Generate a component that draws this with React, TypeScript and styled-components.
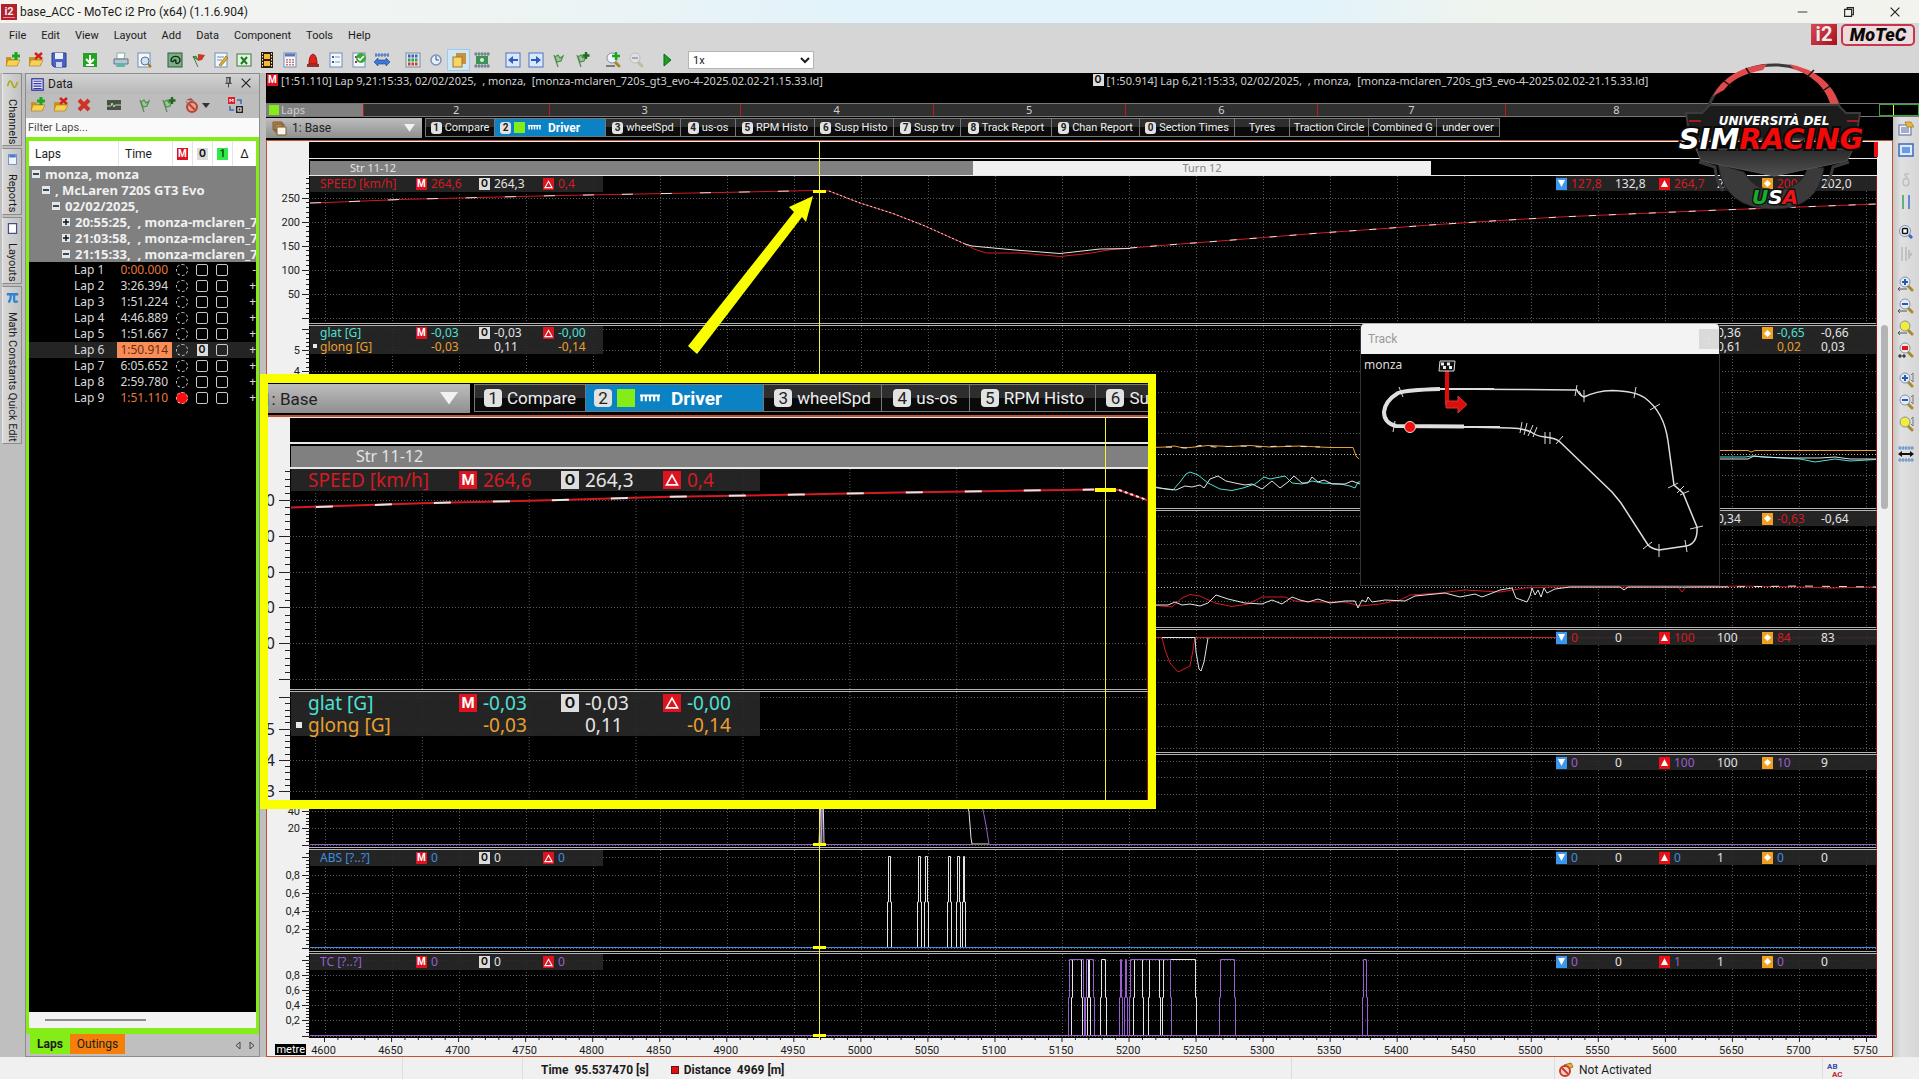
import React from "react";
import styled, { createGlobalStyle } from "styled-components";

const UI = `Roboto, "Liberation Sans", sans-serif`;
const DATA = `"Noto Sans", "DejaVu Sans", sans-serif`;

const RED = "#d41a22";
const CYAN = "#4fe0d4";
const ORANGE = "#e8a030";
const BLUE = "#3d8fe0";
const PURPLE = "#9a5fd0";
const WHITE = "#e4e4e4";

const Global = createGlobalStyle`
  * { box-sizing: border-box; }
  body { margin: 0; background: #d6d6d6; font-family: ${UI}; font-size: 11px; color: #1c1c1c; }
  button, select, input { font: inherit; color: inherit; }
  button { padding: 0; border: 0; background: none; }
`;

const Screen = styled.div`
  position: relative;
  display: flex;
  flex-direction: column;
  min-height: 100vh;
  overflow: hidden;
`;

/* ---------- title, menu, toolbar ---------- */
const TitleBar = styled.header`
  display: flex;
  align-items: center;
  gap: 3px;
  height: 23px;
  padding: 1px 16px 0 1px;
  background: linear-gradient(90deg, #f5f4ef 0%, #eef4f3 26%, #e2f3fb 45%, #e2f3fb 68%, #f0f4ee 78%, #f3f3ee 100%);
`;
const Caption = styled.h1`
  flex: 1;
  margin: 0;
  font-size: 12px;
  font-weight: 400;
  white-space: nowrap;
`;
const WindowButtons = styled.div`
  display: flex;
  gap: 30px;
`;
const WindowButton = styled.button`
  width: 16px;
  height: 16px;
  line-height: 0;
`;
const CommandArea = styled.div`
  display: flex;
  justify-content: space-between;
  background: #d6d6d6;
`;
const MenuBar = styled.nav`
  display: flex;
  gap: 15px;
  height: 25px;
  padding: 0 9px;
`;
const MenuItem = styled.button`
  font-size: 11px;
  line-height: 24px;
`;
const Toolbar = styled.div`
  display: flex;
  align-items: center;
  gap: 8px;
  height: 25px;
  padding: 0 1px 1px;
`;
const ToolGroup = styled.div`
  display: flex;
`;
const ToolButton = styled.button<{ $on?: boolean; $dim?: boolean }>`
  display: grid;
  place-items: center;
  width: 23px;
  height: 22px;
  background: ${(p) => (p.$on ? "#cfe6f7" : "none")};
  box-shadow: ${(p) => (p.$on ? "inset 0 0 0 1px #9ccbef" : "none")};
  opacity: ${(p) => (p.$dim ? 0.35 : 1)};
`;
const SpeedSelect = styled.select`
  width: 126px;
  height: 18px;
  margin-left: 2px;
  padding: 0;
  border: 1px solid #b5b5b5;
  background: #fff;
`;
const Brand = styled.div`
  display: flex;
  gap: 4px;
  height: 22px;
  margin: 1px 4px 0 0;
`;
const BrandI2 = styled.span`
  width: 26px;
  height: 21px;
  background: linear-gradient(135deg, #d84a55, #a80f1c);
  color: #eee;
  font: 700 20px/21px ${UI};
  text-align: center;
`;
const BrandMotec = styled.span`
  width: 74px;
  height: 22px;
  border: 2px solid #c8344c;
  border-radius: 5px;
  background: #eddcde;
  color: #0a0a0a;
  font: italic 900 18px/18px ${UI};
  text-align: center;
`;

/* ---------- workspace frame ---------- */
const Workspace = styled.div`
  display: flex;
  flex: 1;
  background: #bfbfbf;
`;
const SideTabs = styled.div`
  display: flex;
  flex-direction: column;
  gap: 2px;
  width: 25px;
  padding: 0 2px;
`;
const SideTab = styled.button<{ $h: number }>`
  display: flex;
  align-items: center;
  gap: 8px;
  width: 20px;
  height: ${(p) => p.$h}px;
  padding-top: 4px;
  border: 1px solid #8c8c8c;
  border-left-color: #e8e8e8;
  background: linear-gradient(90deg, #d8d8d8, #c2c2c2);
  writing-mode: vertical-rl;
  font-size: 11px;
  line-height: 18px;
  white-space: nowrap;
  & > svg { flex: none; }
`;
const DataPanel = styled.aside`
  display: flex;
  flex-direction: column;
  width: 235px;
  border: 1px solid #8c8c8c;
`;
const PanelTitle = styled.div`
  display: flex;
  align-items: center;
  gap: 4px;
  height: 20px;
  padding: 0 6px 0 5px;
  background: linear-gradient(#d2d2d2, #b8b8b8);
  font-size: 12px;
  & > span { flex: 1; }
`;
const PanelTools = styled.div`
  display: flex;
  align-items: center;
  height: 24px;
  padding-bottom: 2px;
  background: #bdbdbd;
`;
const Gap = styled.span<{ $w: number }>`
  width: ${(p) => p.$w}px;
`;
const FilterInput = styled.input`
  width: 100%;
  height: 19px;
  padding: 0 2px;
  border: 0;
  background: #fafafa;
  font-size: 11px;
  &::placeholder { color: #4a4a4a; }
`;
const GreenFrame = styled.div`
  display: flex;
  flex: 1;
  flex-direction: column;
  border: solid #84ec16;
  border-width: 4px 3px 6px 3px;
  background: #000;
`;
const LapHead = styled.div`
  display: grid;
  grid-template-columns: 89px 54px 20px 20px 20px 1fr;
  align-items: center;
  height: 25px;
  background: #fff;
  font-size: 12px;
  & > span { display: flex; justify-content: center; align-items: center; height: 25px; border-left: 1px solid #e4e4e4; }
  & > span:first-child { justify-content: flex-start; padding-left: 6px; border: 0; }
  & > span:nth-child(2) { justify-content: flex-start; padding-left: 6px; }
`;
const TreeRow = styled.div<{ $level: number }>`
  display: flex;
  align-items: center;
  gap: 5px;
  height: 16px;
  padding-left: ${(p) => 3 + p.$level * 10}px;
  overflow: hidden;
  background: #808080;
  color: #f0f0f0;
  font: 700 13px/16px ${DATA};
  white-space: pre;
`;
const Expander = styled.button`
  flex: none;
  width: 8px;
  height: 8px;
  background: #dfe8ee;
  line-height: 0;
`;
const LapTable = styled.table`
  width: 100%;
  border-collapse: collapse;
  table-layout: fixed;
  color: #d8d8d8;
  font: 12px/16px ${DATA};
  td { height: 16px; padding: 0; overflow: hidden; white-space: nowrap; }
  td:first-child { width: 88px; padding-left: 45px; }
  td:nth-child(2) { width: 55px; padding-right: 4px; text-align: right; }
  td:nth-child(3), td:nth-child(4), td:nth-child(5) { width: 20px; text-align: center; line-height: 0; }
  td:last-child { text-align: right; }
`;
const LapRow = styled.tr<{ $sel?: boolean }>`
  background: ${(p) => (p.$sel ? "#242424" : "#000")};
`;
const LapTime = styled.td<{ $tone?: string }>`
  color: ${(p) => (p.$tone === "warm" ? "#e8793a" : p.$tone === "best" ? "#6b2c0c" : "inherit")};
  background: ${(p) => (p.$tone === "best" ? "#f98d58" : "none")};
`;
const Mark = styled.input<{ $round?: boolean }>`
  appearance: none;
  display: inline-block;
  width: 12px;
  height: 12px;
  margin: 0;
  border: 1px ${(p) => (p.$round ? "dashed" : "solid")} #c8c8c8;
  border-radius: ${(p) => (p.$round ? "50%" : "2px")};
  &:checked { background: #fb0d0d; }
`;
const ListScroll = styled.div`
  height: 16px;
  margin-top: auto;
  padding: 7px 16px;
  background: #f2f2f2;
  &::before { content: ""; display: block; width: 101px; height: 2px; background: #8c8c8c; }
`;
const PanelTabs = styled.div`
  display: flex;
  height: 22px;
  padding: 0 4px;
`;
const PanelTab = styled.button<{ $on?: boolean }>`
  height: 20px;
  padding: 0 7px;
  background: ${(p) => (p.$on ? "#84ec16" : "#f57f0a")};
  font-weight: ${(p) => (p.$on ? 700 : 400)};
  font-size: 12px;
`;
const PanelArrows = styled.span`
  display: flex;
  align-items: center;
  gap: 8px;
  margin-left: auto;
`;

/* ---------- main area ---------- */
const Main = styled.main`
  position: relative;
  display: flex;
  flex: 1;
  flex-direction: column;
  min-width: 0;
  margin-left: 6px;
  background: #000;
`;
const Outings = styled.div`
  display: flex;
  height: 30px;
  padding: 1px 1px;
  color: #d0d0d0;
  font: 11px/14px ${DATA};
  white-space: pre;
`;
const Outing = styled.div`
  display: flex;
  flex: 1;
  gap: 3px;
`;
const LapStrip = styled.div`
  display: flex;
  height: 14px;
  border: solid #777;
  border-width: 1px 0;
  color: #d0d0d0;
  font: 11px/12px ${DATA};
  text-align: center;
`;
const StripCell = styled.div<{ $grow: number; $tone: string }>`
  display: flex;
  flex: ${(p) => p.$grow} 1 0;
  justify-content: center;
  align-items: center;
  background: ${(p) => p.$tone};
  border-left: 1px solid #c01818;
`;
const StripLabel = styled.div`
  display: flex;
  flex: 94 1 0;
  align-items: center;
  gap: 2px;
  padding-left: 3px;
  background: #808080;
`;
const GreenBox = styled.i<{ $s: number }>`
  flex: none;
  width: ${(p) => p.$s}px;
  height: ${(p) => p.$s}px;
  background: #84ec16;
`;
const Position = styled.div`
  position: relative;
  flex: none;
  width: 40px;
  border: 1px solid #2fae2f;
  &::after { content: ""; position: absolute; left: 13px; top: 0; bottom: 0; width: 1px; background: #f4f040; }
`;
const Columns = styled.div`
  display: flex;
  flex: 1;
`;
const Worksheet = styled.div`
  display: flex;
  flex: 1;
  flex-direction: column;
  min-width: 0;
`;
const SheetBar = styled.div<{ $big?: boolean }>`
  display: flex;
  flex: none;
  align-items: flex-start;
  gap: ${(p) => (p.$big ? 4 : 3)}px;
  height: ${(p) => (p.$big ? 32 : 23)}px;
  padding-top: 1px;
  background: #000;
  overflow: hidden;
`;
const BookSelect = styled.label<{ $big?: boolean }>`
  display: flex;
  flex: none;
  align-items: center;
  gap: 5px;
  width: ${(p) => (p.$big ? 210 : 156)}px;
  height: ${(p) => (p.$big ? 29 : 20)}px;
  margin-left: ${(p) => (p.$big ? -8 : 0)}px;
  padding: ${(p) => (p.$big ? "0 12px 0 2px" : "0 7px 0 6px")};
  background: linear-gradient(#bdbdbd, #8f8f8f);
  select {
    flex: 1;
    min-width: 0;
    padding: 0;
    border: 0;
    appearance: none;
    background: none;
    color: #222;
    font-size: ${(p) => (p.$big ? 17 : 12)}px;
  }
`;
const SheetTabs = styled.div<{ $big?: boolean }>`
  display: flex;
  height: ${(p) => (p.$big ? 28 : 19)}px;
  border: 1px solid #777;
`;
const SheetTab = styled.button<{ $on?: boolean; $big?: boolean; $w: number }>`
  display: flex;
  flex: none;
  align-items: center;
  justify-content: ${(p) => (p.$on ? "flex-start" : "center")};
  gap: ${(p) => (p.$big ? 5 : 3)}px;
  width: ${(p) => p.$w}px;
  padding: ${(p) => (p.$on ? (p.$big ? "0 8px" : "0 5px") : "0")};
  border-right: 1px solid #777;
  background: ${(p) => (p.$on ? "#0b82c4" : "linear-gradient(#2e2e2e 50%, #0a0a0a 50%)")};
  color: #eee;
  font-size: ${(p) => (p.$big ? 17 : 11)}px;
  white-space: nowrap;
  &:last-child { border-right: 0; }
  b { margin-left: ${(p) => (p.$big ? 6 : 4)}px; color: #fff; font-size: ${(p) => (p.$big ? 19 : 12)}px; }
`;
const KeyCap = styled.i<{ $big?: boolean }>`
  width: ${(p) => (p.$big ? 18 : 11)}px;
  height: ${(p) => (p.$big ? 18 : 12)}px;
  border-radius: ${(p) => (p.$big ? 4 : 3)}px;
  background: #e2e2e2;
  color: #222;
  font: ${(p) => (p.$big ? "17px/18px" : "700 10px/12px")} ${UI};
  text-align: center;
`;
const ChartFrame = styled.section`
  display: flex;
  flex: 1;
  border: 1px solid #c4512f;
  background: #f0f0f0;
`;
const Charts = styled.div`
  display: flex;
  flex: 1;
  flex-direction: column;
  min-width: 0;
  padding-top: 1px;
`;
const Gutter = styled.div`
  width: 15px;
  padding: 184px 4px 0;
  &::before { content: ""; display: block; width: 7px; height: 184px; border-radius: 4px; background: #b4b4b4; }
`;
const Stack = styled.div`
  position: relative;
`;
const AxisRow = styled.div<{ $axis: number }>`
  display: grid;
  grid-template-columns: ${(p) => p.$axis}px minmax(0, 1fr);
`;
const AxisSvg = styled.svg<{ $big?: boolean }>`
  display: block;
  text { font: ${(p) => (p.$big ? 16 : 11)}px ${(p) => (p.$big ? DATA : UI)}; text-anchor: end; fill: #222; }
  path { stroke: #222; stroke-width: 1; fill: none; }
`;
const Plot = styled.div<{ $last?: boolean; $big?: boolean; $h: number }>`
  position: relative;
  height: ${(p) => p.$h}px;
  border-right: 1px solid #8a1515;
  border-bottom: ${(p) => (p.$last ? "0" : "3px double #b4b4b4")};
  background: #000;
  overflow: hidden;
  & > svg { display: block; width: 100%; height: 100%; }
  & > svg path { fill: none; vector-effect: non-scaling-stroke; }
  & > svg path.curve { stroke-width: ${(p) => (p.$big ? 2 : 1)}px; }
`;
const TopStrip = styled.div<{ $big?: boolean }>`
  display: grid;
  grid-template-rows: ${(p) => (p.$big ? "24px 25px" : "16px 17px")};
  border-bottom: ${(p) => (p.$big ? 2 : 1)}px solid #e8e8e8;
  background: #000;
`;
const Sections = styled.div<{ $big?: boolean }>`
  display: flex;
  padding: 2px 0 0 1px;
  border-top: ${(p) => (p.$big ? 2 : 1)}px solid #e8e8e8;
  font: ${(p) => (p.$big ? "16px/20px" : "11px/14px")} ${DATA};
`;
const Section = styled.div<{ $grow: number; $kind: "str" | "turn" | "none"; $indent?: number }>`
  flex: ${(p) => p.$grow} 1 0;
  text-indent: ${(p) => p.$indent ?? 0}px;
  background: ${(p) => (p.$kind === "str" ? "#808080" : p.$kind === "turn" ? "#f0f0f0" : "#000")};
  color: ${(p) => (p.$kind === "str" ? "#e4e4e4" : "#858585")};
  text-align: ${(p) => (p.$kind === "turn" ? "center" : "left")};
`;
const Cursor = styled.div`
  position: absolute;
  top: 0;
  bottom: 0;
  width: 1px;
  background: #f4f432;
`;
const CursorLayer = styled.div<{ $axis: number }>`
  position: absolute;
  inset: 0 0 0 ${(p) => p.$axis}px;
  pointer-events: none;
`;
const CursorTick = styled.i<{ $big?: boolean }>`
  position: absolute;
  left: ${(p) => (p.$big ? -10 : -6)}px;
  width: ${(p) => (p.$big ? 21 : 13)}px;
  height: ${(p) => (p.$big ? 4 : 3)}px;
  background: #ffff00;
`;
const EndBlock = styled.i`
  position: absolute;
  top: 0;
  right: -1px;
  width: 4px;
  height: 15px;
  background: #e81010;
`;
const LegendLeft = styled.div<{ $big?: boolean }>`
  position: absolute;
  top: 0;
  left: 1px;
  width: ${(p) => (p.$big ? 469 : 293)}px;
  padding-left: ${(p) => (p.$big ? 17 : 10)}px;
  background: rgba(40, 40, 40, 0.9);
`;
const LegendDot = styled.i<{ $big?: boolean }>`
  position: absolute;
  left: ${(p) => (p.$big ? 5 : 3)}px;
  bottom: ${(p) => (p.$big ? 8 : 6)}px;
  width: ${(p) => (p.$big ? 6 : 4)}px;
  height: ${(p) => (p.$big ? 6 : 4)}px;
  background: #e8e8e8;
`;
const LegendRow = styled.div<{ $big?: boolean; $color: string; $two?: boolean }>`
  display: grid;
  grid-template-columns: ${(p) => (p.$big ? "151px 102px 102px 1fr" : "96px 63px 64px 1fr")};
  align-items: center;
  height: ${(p) => (p.$big ? 22 : p.$two ? 14 : 16)}px;
  color: ${(p) => p.$color};
  font: ${(p) => (p.$big ? "19px/22px" : "12px/14px")} ${DATA};
  white-space: nowrap;
`;
const Cell = styled.span<{ $big?: boolean; $plain?: boolean; $indent?: boolean }>`
  display: flex;
  align-items: center;
  gap: ${(p) => (p.$big ? 6 : 4)}px;
  padding-left: ${(p) => (p.$indent ? (p.$big ? 24 : 15) : 0)}px;
  color: ${(p) => (p.$plain ? WHITE : "inherit")};
`;
const LegendRight = styled.div`
  position: absolute;
  top: 0;
  right: 0;
  width: 320px;
  background: rgba(40, 40, 40, 0.9);
`;
const StatRow = styled.div<{ $color: string; $two?: boolean }>`
  display: grid;
  grid-template-columns: 59px 44px 58px 45px 59px 1fr;
  align-items: center;
  height: ${(p) => (p.$two ? 14 : 15)}px;
  color: ${(p) => p.$color};
  font: 12px/14px ${DATA};
`;
const Badge = styled.i<{ $bg: string; $fg?: string; $big?: boolean }>`
  display: inline-grid;
  flex: none;
  place-items: center;
  width: ${(p) => (p.$big ? 18 : 11)}px;
  height: ${(p) => (p.$big ? 18 : 12)}px;
  background: ${(p) => p.$bg};
  color: ${(p) => p.$fg ?? "#fff"};
  font: 700 ${(p) => (p.$big ? "15px/18px" : "10px/12px")} ${UI};
`;
const DistanceAxis = styled.div`
  position: relative;
  display: grid;
  grid-template-columns: 42px minmax(0, 1fr);
  height: 18px;
`;
const Unit = styled.span`
  justify-self: end;
  align-self: center;
  margin: 4px 3px 0 0;
  padding: 0 1px;
  background: #000;
  color: #fff;
  font: 11px/11px ${UI};
`;
const DistanceScale = styled.div`
  position: relative;
  & > svg { display: block; width: 100%; height: 5px; }
`;
const DistanceLabel = styled.span`
  position: absolute;
  top: 6px;
  width: 40px;
  margin-left: -21px;
  font: 11px/13px ${UI};
  text-align: center;
`;
const RightTools = styled.div`
  display: flex;
  flex-direction: column;
  align-items: center;
  gap: 8px;
  width: 26px;
  background: linear-gradient(90deg, #c6c6c6, #e0e0e0 30%, #d6d6d6);
`;
const RightGroup = styled.div`
  display: flex;
  flex-direction: column;
`;

/* ---------- floating parts ---------- */
const TrackWindow = styled.section`
  position: absolute;
  top: 251px;
  right: 199px;
  width: 360px;
  height: 262px;
  border: 1px solid #333;
  border-top: 0;
  border-radius: 4px 4px 0 0;
  background: #000;
  overflow: hidden;
`;
const TrackTitle = styled.div`
  display: flex;
  align-items: center;
  justify-content: space-between;
  height: 30px;
  padding-left: 7px;
  background: #f3f3f3;
  color: #9a9a9a;
  font: 12px ${UI};
`;
const TrackClose = styled.button`
  width: 20px;
  height: 20px;
  background: #dadada;
  color: #eee;
`;
const TrackBody = styled.div`
  padding: 3px;
  color: #dcdcdc;
  font: 12px/16px ${DATA};
  & > svg { position: absolute; left: 0; top: 30px; }
`;
const Magnifier = styled.section`
  position: absolute;
  left: -6px;
  top: 301px;
  display: flex;
  flex-direction: column;
  width: 896px;
  height: 435px;
  border: 9px solid #faff00;
  border-left-width: 8px;
  border-right-width: 8px;
  background: #f0f0f0;
  overflow: hidden;
`;
const MagnifierCharts = styled.div`
  position: relative;
  flex: 1;
  border-top: 2px solid #c4512f;
  padding-top: 1px;
`;
const Arrow = styled.svg`
  position: absolute;
  left: 414px;
  top: 120px;
`;
const Emblem = styled.svg`
  position: absolute;
  right: 49px;
  top: -15px;
`;

/* ---------- status ---------- */
const StatusBar = styled.footer`
  display: grid;
  grid-template-columns: 403fr 120fr 769fr 263fr 268fr 96fr;
  height: 22px;
  background: #f0f0f0;
  font-size: 12px;
`;
const StatusCell = styled.div<{ $pad?: number; $strong?: boolean }>`
  display: flex;
  align-items: center;
  gap: 5px;
  min-width: 0;
  height: 22px;
  padding: 3px 0 0 ${(p) => p.$pad ?? 0}px;
  border-right: 1px solid #dcdcdc;
  font-weight: ${(p) => (p.$strong ? 700 : 400)};
  white-space: pre;
  &:last-child { border-right: 0; }
`;
const RedDot = styled.i`
  width: 8px;
  height: 8px;
  margin-left: 17px;
  border: 1px solid #701010;
  background: #e01010;
`;

/* ---------- icons ---------- */
const lens = (fill: string, inner: React.ReactNode) => (
  <>
    <path d="M10 10l4 4" stroke="#a88a2c" strokeWidth="3" strokeLinecap="round" />
    <circle cx="7" cy="6" r="5" fill={fill} stroke="#8294a8" />
    {inner}
  </>
);
const reach = <path d="M0 13h9M2 11l-2 2 2 2" stroke="#555" />;
const rise = <path d="M15 1v9M13 3l2-2M13 8l2 2" stroke="#777" />;
const folder = (
  <>
    <path d="M1 5h5l1 2h6v7H1z" fill="#c99420" />
    <path d="M3 8h12l-3 6H1z" fill="#f6d154" stroke="#a87c18" strokeWidth=".6" />
  </>
);
const plus = <path d="M11 0v8M7 4h8" stroke="#1da51d" strokeWidth="3" />;
const cross = <path d="M7 1l7 6M14 1L7 7" stroke="#cf2418" strokeWidth="2.6" />;
const flag = (
  <path d="M3 3l4 12M4 5l3-2 2 3 3-2-2 5-4 1z" stroke="#4f8d4a" strokeWidth="1.2" fill="#9cc796" />
);
const sheet = <rect x="2" y="1" width="12" height="14" fill="#f4f8fd" stroke="#6f90b8" />;

const ICONS: Record<string, React.ReactNode> = {
  open: <>{folder}{plus}</>,
  close: <>{folder}{cross}</>,
  save: (
    <>
      <path d="M1 1h14v14H3l-2-2z" fill="#4a62c4" stroke="#2b3c8c" />
      <path d="M4 1h8v6H4z" fill="#eaf0fb" />
      <path d="M5 10h6v5H5z" fill="#d0d8ee" />
    </>
  ),
  download: (
    <>
      <rect x="1" y="1" width="14" height="14" fill="#22a322" />
      <path d="M8 3v6M4 7l4 4 4-4M4 13h8" stroke="#fff" strokeWidth="2" fill="none" />
    </>
  ),
  print: (
    <>
      <path d="M4 1h8l-1 6H4z" fill="#fff" stroke="#8aa" />
      <path d="M1 7h14v5H1z" fill="#b9c5cf" stroke="#5f7383" />
      <path d="M4 11h8v4H3z" fill="#5bb8a8" />
    </>
  ),
  preview: <>{sheet}<circle cx="9" cy="9" r="4" fill="#cfe3f5" stroke="#59728c" /><path d="M12 12l3 3" stroke="#b06a20" strokeWidth="2" /></>,
  circuit: (
    <>
      <rect x="1" y="1" width="14" height="14" fill="#7db088" stroke="#2f5c3a" />
      <path d="M4 9c0-6 9-6 9-1 0 3-3 4-4 3s1-3-1-3-1 3-4 1z" fill="none" stroke="#0c2c14" strokeWidth="1.4" />
    </>
  ),
  flagRed: <><path d="M3 4l5 11M3 5l3-1 2 4z" stroke="#3d7d3d" fill="#69a869" /><path d="M8 2l7 1-3 5-4 1z" fill="#c93a22" /></>,
  edit: <>{sheet}<path d="M4 5h7M4 8h5" stroke="#7a8ea8" /><path d="M6 13l7-9 2 2-7 8z" fill="#e0b028" stroke="#7c5c10" strokeWidth=".6" /></>,
  excel: <><rect x="1" y="2" width="14" height="12" fill="#e4f2e4" stroke="#3a7d3a" /><path d="M5 5l6 7M11 5l-6 7" stroke="#1e7a1e" strokeWidth="2" /></>,
  film: (
    <>
      <rect x="2" y="0" width="12" height="16" fill="#2c1c08" />
      <path d="M5 2h6v5H5zM5 9h6v5H5z" fill="#f4ba30" />
      <path d="M3.5 1v14M12.5 1v14" stroke="#eee" strokeDasharray="1.5 1.5" />
    </>
  ),
  calc: <>{sheet}<path d="M3 3h10" stroke="#5878b8" strokeWidth="3" /><path d="M5 7v7M8 7v7M11 7v7" stroke="#d07878" strokeWidth="2" strokeDasharray="1.5 1" /></>,
  alarm: <><path d="M4 12c0-13 8-13 8 0z" fill="#e02418" stroke="#8c120a" /><rect x="2" y="12" width="12" height="3" fill="#98302a" /></>,
  list: <>{sheet}<path d="M4 5h2M4 10h2" stroke="#3460b0" strokeWidth="2" /><path d="M7 5h5M7 10h5" stroke="#8898b0" /></>,
  listCheck: <>{sheet}<path d="M4 5h2M4 10h2" stroke="#b03434" strokeWidth="2" /><circle cx="10" cy="6" r="5" fill="#3aa83a" /><path d="M7 6l2 2 4-4" stroke="#fff" strokeWidth="1.6" fill="none" /></>,
  measure: <><path d="M1 3h14M2 1v4M5 1v4M8 1v4M11 1v4M14 1v4" stroke="#3c68b8" /><path d="M0 10l4-4v2h8V6l4 4-4 4v-2H4v2z" fill="#3c78d8" stroke="#1e3f80" strokeWidth=".6" /></>,
  palette: (
    <>
      <rect x="1" y="1" width="14" height="14" fill="#dfe8ee" stroke="#7890a0" />
      <path d="M3 4h10" stroke="#4060c0" strokeWidth="3" strokeDasharray="2.5 1" />
      <path d="M3 8h10" stroke="#38a048" strokeWidth="3" strokeDasharray="2.5 1" />
      <path d="M3 12h10" stroke="#d04030" strokeWidth="3" strokeDasharray="2.5 1" />
    </>
  ),
  clock: <><circle cx="8" cy="8" r="5" fill="#e8f0fa" stroke="#7c92b4" strokeWidth="1.5" /><path d="M8 4v4h3" stroke="#30507c" fill="none" /></>,
  windows: <><rect x="5" y="1" width="10" height="11" fill="#c99040" /><rect x="2" y="5" width="9" height="10" fill="#f6d468" stroke="#a87820" /></>,
  chip: <><path d="M0 2h16M0 14h16M2 0v4M5 0v4M8 0v4M11 0v4M14 0v4M2 12v4M5 12v4M8 12v4M11 12v4M14 12v4" stroke="#56707c" /><rect x="2" y="4" width="12" height="8" fill="#3d9152" /><circle cx="8" cy="8" r="2" fill="#d2f0d8" /></>,
  left: <><rect x="1" y="1" width="14" height="14" fill="#dce8fa" stroke="#4a74c4" /><path d="M3 8l5-4v3h5v2H8v3z" fill="#2a5cc8" /></>,
  right: <><rect x="1" y="1" width="14" height="14" fill="#dce8fa" stroke="#4a74c4" /><path d="M13 8L8 4v3H3v2h5v3z" fill="#2a5cc8" /></>,
  flag: flag,
  flagPlus: <>{flag}<path d="M12 0v7M8.5 3.5h7" stroke="#1f6a1f" strokeWidth="2.4" /></>,
  zoomAdd: <>{lens("#eef4fb", <path d="M11 0v8M7 4h8" stroke="#1da51d" strokeWidth="2.4" />)}<path d="M1 14h9" stroke="#222" /></>,
  zoomDel: lens("#eef4fb", <path d="M4 6h6" stroke="#555" strokeWidth="2" />),
  play: <path d="M5 2l7 6-7 6z" fill="#18a024" stroke="#0d6c16" />,
  remove: <path d="M3 3l10 10M13 3L3 13" stroke="#cf3226" strokeWidth="4" />,
  scope: <><rect x="1" y="3" width="14" height="10" fill="#4a4f48" /><path d="M1 9h4l1-3 2 4 1-2h6" stroke="#b8e0b0" fill="none" /></>,
  blocked: <><path d="M3 4l5 10" stroke="#7c7c7c" /><circle cx="9" cy="10" r="5" fill="#e8a090" stroke="#b84434" strokeWidth="2" /><path d="M6 7l6 6" stroke="#b84434" strokeWidth="2" /><path d="M3 3l5-2 3 3z" fill="#b04a40" /></>,
  swap: <><rect x="0" y="0" width="7" height="7" fill="#e0202c" /><path d="M2 5V2l1.500 2L5 2v3" stroke="#fff" fill="none" /><rect x="8" y="9" width="7" height="7" fill="#222" /><rect x="10" y="11" width="3" height="3" fill="none" stroke="#fff" /><path d="M2 9v4h4M13 7V3H9" stroke="#3c70c0" strokeWidth="1.6" fill="none" /></>,
  props: <><rect x="1" y="5" width="12" height="10" fill="#f0f4fc" stroke="#58689c" /><path d="M3 8h8M3 10h8M3 12h8" stroke="#58689c" /><path d="M7 2h6l3 5H9z" fill="#e8b838" stroke="#8c6c18" strokeWidth=".6" /></>,
  panel: <><rect x="1" y="2" width="14" height="12" fill="#dceaff" stroke="#3c68b8" strokeWidth="1.5" /><path d="M4 5h8v6H4z" fill="#6a9be4" /></>,
  delta: <path d="M11 2H7c-1 2 4 4 4 8 0 5-6 5-6 0 0-3 3-4 4-3" stroke="#888" strokeWidth="1.5" fill="none" />,
  cursors: <><path d="M5 1v14" stroke="#3ba05a" strokeWidth="1.5" /><path d="M11 1v14" stroke="#4070d0" strokeWidth="1.5" /></>,
  lensBox: <><path d="M10 10l4 4" stroke="#3c68c0" strokeWidth="3" /><circle cx="7" cy="7" r="5.5" fill="#e4ecf6" stroke="#7f93aa" /><rect x="4.5" y="4.5" width="5" height="5" rx="1" fill="#fff" stroke="#111" strokeWidth="1.5" /></>,
  bars: <path d="M4 1v14M8 1v14M11 4v9M14 7l-3 4" stroke="#777" strokeWidth="1.5" />,
  zoomInX: <>{lens("#e2ebf8", <path d="M7 3v6M4 6h6" stroke="#3058a8" strokeWidth="2" />)}{reach}</>,
  zoomOutX: <>{lens("#e2ebf8", <path d="M4 6h6" stroke="#3058a8" strokeWidth="2" />)}{reach}</>,
  zoomFullX: <>{lens("#f4ec3c", null)}{reach}</>,
  zoomRed: <>{lens("#fbe8e8", <rect x="4" y="4" width="6" height="4" fill="#d81c1c" />)}<path d="M0 14h8M2 12v4M6 12v4" stroke="#111" /></>,
  zoomInY: <>{lens("#e2ebf8", <path d="M7 3v6M4 6h6" stroke="#3058a8" strokeWidth="2" />)}{rise}</>,
  zoomOutY: <>{lens("#e2ebf8", <path d="M4 6h6" stroke="#3058a8" strokeWidth="2" />)}{rise}</>,
  zoomFullY: <>{lens("#f4ec3c", null)}{rise}</>,
  fit: <><path d="M0 2h16M0 14h16M2 0v4M5 0v4M8 0v4M11 0v4M14 0v4M2 12v4M5 12v4M8 12v4M11 12v4M14 12v4" stroke="#5c88c8" /><path d="M0 8l4-3v2h8V5l4 3-4 3V9H4v2z" fill="#111" /></>,
  wave: <path d="M2 10c2-8 4-8 6-2s4 4 6-3" stroke="#b0a810" strokeWidth="2" fill="none" />,
  report: <><rect x="3" y="2" width="10" height="12" fill="#eef4fc" stroke="#5c84bc" /><path d="M4 4h8" stroke="#4a78c8" strokeWidth="3" /></>,
  layout: <rect x="3" y="2" width="10" height="12" fill="#fff" stroke="#40508c" strokeWidth="1.5" />,
  pi: <path d="M1 4h14M6 4c0 4-1 8-3 10M10 4v8c0 2 3 2 4 0" stroke="#2a86d0" strokeWidth="2.8" fill="none" />,
  dataList: <><rect x="1" y="1" width="14" height="14" fill="#e8eafc" stroke="#282c90" strokeWidth="1.5" /><path d="M3 4h10M3 7h10M3 10h10M3 13h10" stroke="#3034a8" strokeWidth="1.5" /></>,
  pin: <path d="M5 2h6M6 2v7M10 2v7M9 2v7M4 9h8M8 9v5" stroke="#222" fill="none" />,
  x: <path d="M3 3l10 10M13 3L3 13" stroke="#222" strokeWidth="1.4" />,
  min: <path d="M2 8h11" stroke="#222" />,
  max: <path d="M3 5h8v8H3zM6 5V3h7v8h-2" stroke="#222" strokeWidth="1.3" fill="none" />,
  stop: <><path d="M6 3l7-2 2 4-5 2z" fill="#e4b040" stroke="#a07818" /><circle cx="7" cy="9" r="5" fill="#f4d8d0" stroke="#cc3a24" strokeWidth="2" /><path d="M4 6l6 6" stroke="#cc3a24" strokeWidth="2" /></>,
};
const Icon = ({ n, s = 16 }: { n: string; s?: number }) => (
  <svg width={s} height={s} viewBox="0 0 16 16" fill="none" aria-hidden="true">
    {ICONS[n]}
  </svg>
);
const Ruler = ({ w }: { w: number }) => (
  <svg width={w} height={w / 2} viewBox="0 0 12 6" aria-hidden="true">
    <path d="M0 1.5h12M1 1v4M3.5 1v4M6 1v4M8.5 1v4M11 1v4" stroke="#fff" strokeWidth="1.3" />
  </svg>
);
const Caret = ({ w }: { w: number }) => (
  <svg width={w} height={w * 0.7} viewBox="0 0 10 7" aria-hidden="true">
    <path d="M0 0h10L5 7z" fill="#f2f2f2" />
  </svg>
);

/* ---------- data ---------- */
const MENU = ["File", "Edit", "View", "Layout", "Add", "Data", "Component", "Tools", "Help"];
const TOOLS = [
  ["open", "close", "save"],
  ["download"],
  ["print", "preview"],
  ["circuit", "flagRed", "edit", "excel", "film", "calc", "alarm", "list", "listCheck", "measure"],
  ["palette", "clock", "windows", "chip"],
  ["left", "right", "flag", "flagPlus"],
  ["zoomAdd", "zoomDel"],
  ["play"],
];
const SIDE: [string, string, number][] = [
  ["Channels", "wave", 73],
  ["Reports", "report", 67],
  ["Layouts", "layout", 67],
  ["Math Constants Quick Edit", "pi", 158],
];
const TREE: [number, boolean, string][] = [
  [0, true, "monza, monza"],
  [1, true, ", McLaren 720S GT3 Evo"],
  [2, true, "02/02/2025,"],
  [3, false, "20:55:25,  , monza-mclaren_7"],
  [3, false, "21:03:58,  , monza-mclaren_7"],
  [3, true, "21:15:33,  , monza-mclaren_7"],
];
const LAPS: [string, string?][] = [
  ["0:00.000", "warm"], ["3:26.394"], ["1:51.224"], ["4:46.889"], ["1:51.667"],
  ["1:50.914", "best"], ["6:05.652"], ["2:59.780"], ["1:51.110", "warm"],
];
const SHEETS: [string, string, number][] = [
  ["1", "Compare", 69], ["2", "Driver", 111], ["3", "wheelSpd", 75], ["4", "us-os", 55],
  ["5", "RPM Histo", 79], ["6", "Susp Histo", 79], ["7", "Susp trv", 67], ["8", "Track Report", 91],
  ["9", "Chan Report", 88], ["0", "Section Times", 95], ["", "Tyres", 55],
  ["", "Traction Circle", 79], ["", "Combined G", 68], ["", "under over", 62],
];
const BIG_SHEETS: [string, string, number][] = [
  ["1", "Compare", 111], ["2", "Driver", 178], ["3", "wheelSpd", 118], ["4", "us-os", 88],
  ["5", "RPM Histo", 126], ["6", "Susp Histo", 126],
];
const RIGHT_TOOLS = [
  ["props", "panel"], ["delta", "cursors"], ["lensBox", "bars"],
  ["zoomInX", "zoomOutX", "zoomFullX", "zoomRed"], ["zoomInY", "zoomOutY", "zoomFullY"], ["fit"],
];

/* The plot spans this many chart units; 50 m of track take 67 of them. */
const X0 = 309;
const SPAN = 1567;
const METRE_X = (m: number) => 324.5 + ((m - 4600) / 50) * 67;
const CURSOR = ((METRE_X(4969) - X0) / SPAN) * 100;

const pulses = (edges: number[][], top: number, base: number) =>
  edges
    .map(([a, b]) => {
      const mid = (top + base) / 2;
      return `M${a + 0.5} ${base}V${mid}H${a + 1.5}V${top}H${b - 0.5}V${mid}H${b + 0.5}V${base}`;
    })
    .join("");

type Line = { d: string; c: string; dash?: string };
type PanelSpec = {
  top: number; h: number; zero: number; step: number; from: number; to: number;
  labels: Record<number, string>; bright?: boolean; lines: Line[];
};
const line = (pts: string) => "M" + pts.trim().split(/\s+/).join("L");

const SPEED_R = "310,203 340,202 400,199.5 480,197.5 560,195.5 640,194 720,192.5 815,190.5 829,191 860,203 893,213.5 925,226 965,244 974,249 986,253 1020,253 1060,256.5 1088,253.5 1112,249.5 1130,248 1180,244 1220,241 1270,237 1320,233 1378,229 1430,225 1500,220.5 1560,217 1640,213.5 1720,210 1800,207 1876,204";
const SPEED_W1 = "310,203 340,202 400,199.5 480,197.5 560,195.5 640,194 720,192.5 815,190.5";
const SPEED_W2 = "829,191 860,203 893,213.5 925,226 965,244";
const SPEED_W3 = "965,244 972,246 1015,250 1060,253.5 1100,249 1130,248.5";
const SPEED_W4 = "1130,248 1180,244 1220,241 1270,237 1320,233 1378,229 1430,225 1500,220.5 1560,217 1640,213.5 1720,210 1800,207 1876,204";

const PANELS: PanelSpec[] = [
  {
    top: 176, h: 150, zero: 317.5, step: 24, from: 0, to: 5,
    labels: { 1: "50", 2: "100", 3: "150", 4: "200", 5: "250" },
    lines: [
      { d: line(SPEED_R), c: RED },
      { d: line(SPEED_W1), c: WHITE, dash: "11 28" },
      { d: line(SPEED_W2), c: WHITE, dash: "2 2" },
      { d: line(SPEED_W3), c: WHITE },
      { d: line(SPEED_W4), c: WHITE, dash: "7 13" },
    ],
  },
  {
    top: 326, h: 185, zero: 454, step: 20.8, from: -2, to: 6, bright: true,
    labels: { 5: "5", 4: "4" },
    lines: [
      { d: line("1150,447.5 1166,447 1174,446 1184,448 1195,447 1208,445.5 1230,446.5 1250,445.5 1270,447 1300,446 1330,447.5 1353,447.5 1356,456 1359,459"), c: ORANGE },
      { d: line("1166,447 1190,448 1200,445.5 1215,447 1240,446 1262,447 1282,446 1320,447"), c: WHITE, dash: "6 9" },
      { d: line("1150,487 1156,487 1165,489 1173,490 1180,482 1186,474 1190,472 1198,475 1208,483 1220,489 1232,490.5 1243,488 1255,484 1264,477 1270,479 1285,476 1292,483 1302,484 1312,481 1322,483 1340,484 1350,486 1355,488 1358,482 1400,478 1720,457 1745,457 1752,456 1780,458 1800,459 1815,462 1835,459 1850,461 1876,459.5"), c: CYAN },
      { d: line("1150,487 1168,489 1176,490 1185,486 1192,487 1200,485 1204,488 1210,479 1218,476 1226,481 1235,483 1245,485 1252,484 1262,489 1272,481 1280,488 1288,482 1294,476 1302,483 1308,483 1312,477 1318,482 1324,480 1332,484 1345,484 1352,481 1360,484 1720,459 1748,459 1754,456 1762,457 1790,458 1820,458 1835,457 1850,459 1876,459"), c: WHITE },
      { d: line("1700,450.5 1748,450.5 1751,452 1755,450.5 1876,450.5"), c: ORANGE },
    ],
  },
  {
    top: 511, h: 119, zero: 587, step: 14.3, from: -2, to: 5, bright: true, labels: {},
    lines: [
      { d: line("1150,605 1172,607 1182,598 1190,594.5 1200,596 1215,603 1232,606.5 1248,604 1262,597 1285,597 1295,601 1320,602 1345,602 1360,606 1380,604 1400,600 1410,595 1440,593 1465,590 1500,592 1525,588 1550,587 1678,587 1682,592 1686,587 1740,586 1800,587 1830,588 1876,587"), c: RED },
      { d: line("1150,605 1168,605 1175,602 1182,605 1190,604 1200,606 1208,603 1216,595 1228,599 1245,603 1262,604 1272,600 1282,604 1292,597 1300,600 1308,602 1318,599 1330,603 1345,601 1355,601 1358,608 1362,600 1366,602 1368,597 1372,602 1385,600 1405,601 1415,596 1445,593 1460,597 1475,594 1482,597 1500,590 1512,588 1516,598 1527,602 1530,596 1532,588 1535,595 1538,590 1541,597 1544,588 1547,593 1555,589 1570,587 1620,587 1624,590 1628,587 1720,587"), c: WHITE },
      { d: line("1720,587 1800,586 1876,587"), c: WHITE, dash: "8 9" },
    ],
  },
  {
    top: 630, h: 125, zero: 747.5, step: 22, from: 0, to: 5, labels: {},
    lines: [
      { d: line("1150,637.5 1162,637.5 1165,650 1170,663 1178,672 1190,666 1193,650 1195,637.5 1876,637.5"), c: RED },
      { d: line("1162,637.5 1195,637.5 1196,652 1199,669 1201,671 1204,662 1208,638"), c: WHITE },
    ],
  },
  {
    top: 755, h: 95, zero: 844.5, step: 16.8, from: 0, to: 5, labels: { 1: "20", 2: "40" },
    lines: [
      { d: line("819,844 821,790 821,844 823,790 824,844"), c: WHITE },
      { d: line("822,844 822,790"), c: PURPLE },
      { d: line("966,800 969,812 971,838 972,844 989,844"), c: WHITE },
      { d: line("310,844.5 972,844.5"), c: PURPLE },
      { d: line("980,800 983,810 986,825 989,844.5 1876,844.5"), c: PURPLE },
    ],
  },
  {
    top: 850, h: 104, zero: 947.5, step: 18.2, from: 0, to: 5,
    labels: { 1: "0,2", 2: "0,4", 3: "0,6", 4: "0,8" },
    lines: [
      { d: pulses([[887, 891], [917, 921], [924, 928], [947, 951], [956, 960], [962, 965]], 856.5, 947.5), c: WHITE },
      { d: line("310,947.5 1876,947.5"), c: BLUE },
    ],
  },
  {
    top: 954, h: 84, zero: 1035.5, step: 15.2, from: 0, to: 5,
    labels: { 1: "0,2", 2: "0,4", 3: "0,6", 4: "0,8" },
    lines: [
      { d: pulses([[1071, 1082], [1087, 1090], [1100, 1106], [1133, 1143], [1148, 1160], [1162, 1196]], 959.5, 1035.5), c: WHITE },
      { d: pulses([[1068, 1084], [1085, 1094], [1119, 1122], [1124, 1127], [1129, 1171], [1219, 1235], [1362, 1367]], 959.5, 1035.5), c: PURPLE },
      { d: line("310,1035.5 1876,1035.5"), c: PURPLE },
    ],
  },
];

/* ---------- chart pieces ---------- */
const levels = (p: PanelSpec) =>
  Array.from({ length: p.to - p.from + 1 }, (_, i) => ({ k: p.from + i, y: p.zero - (p.from + i) * p.step }));

function Axis({ p, width, big, labelX }: { p: PanelSpec; width: number; big?: boolean; labelX: number }) {
  let d = "";
  levels(p).forEach(({ y }) => {
    const t = Math.round(y - p.top) + 0.5;
    d += `M${width - (big ? 11 : 7)} ${t}H${width}`;
    for (let j = 1; j < 5; j++) {
      const m = Math.round(y - p.top - (j * p.step) / 5) + 0.5;
      if (m > 1) d += `M${width - (big ? 5 : 3)} ${m}H${width}`;
    }
  });
  return (
    <AxisSvg $big={big} width={width} height={p.h}>
      <path d={d} />
      {levels(p).map(({ k, y }) =>
        p.labels[k] ? (
          <text key={k} x={labelX} y={Math.round(y - p.top) + (big ? 6 : 4)}>{p.labels[k]}</text>
        ) : null
      )}
    </AxisSvg>
  );
}

function Curves({ p, x0, span, xs }: { p: PanelSpec; x0: number; span: number; xs: number[] }) {
  const bottom = p === PANELS[PANELS.length - 1] ? 0 : 3;
  return (
    <svg viewBox={`${x0} ${p.top} ${span} ${p.h - bottom}`} preserveAspectRatio="none">
      {levels(p).map(({ k, y }) => (
        <path
          key={k}
          d={`M${x0} ${Math.round(y) + 0.5}H${x0 + span}`}
          stroke={p.bright && k === 0 ? "#b8b8b8" : "#585858"}
          strokeDasharray="1 2"
        />
      ))}
      <path d={xs.map((x) => `M${Math.round(x) + 0.5} ${p.top}V${p.top + p.h}`).join("")} stroke="#585858" strokeDasharray="1 2" />
      {p.lines.map((l, i) => (
        <path key={i} className="curve" d={l.d} stroke={l.c} strokeDasharray={l.dash} />
      ))}
    </svg>
  );
}

const Shape = ({ d, s = 9 }: { d: string; s?: number }) => (
  <svg width={s} height={s} viewBox="0 0 10 10"><path d={d} fill="#fff" /></svg>
);
const MBadge = ({ big }: { big?: boolean }) => <Badge $bg="#dd1420" $big={big}>M</Badge>;
const OBadge = ({ big }: { big?: boolean }) => <Badge $bg="#dcdcdc" $fg="#111" $big={big}>O</Badge>;
const DBadge = ({ big }: { big?: boolean }) => (
  <Badge $bg="#dd1420" $big={big}>
    <svg width={big ? 14 : 9} height={big ? 14 : 9} viewBox="0 0 10 10">
      <path d="M5 1.5L9 8.5H1z" fill="none" stroke="#fff" strokeWidth="1.2" />
    </svg>
  </Badge>
);

type LegendLine = { name: string; v: [string, string, string]; c: string };
function Legend({ rows, big }: { rows: LegendLine[]; big?: boolean }) {
  return (
    <LegendLeft $big={big}>
      {rows.length > 1 && <LegendDot $big={big} />}
      {rows.map((r, i) => (
        <LegendRow key={r.name} $big={big} $color={r.c} $two={rows.length > 1}>
          <span>{r.name}</span>
          <Cell $big={big} $indent={i > 0}>{i === 0 && <MBadge big={big} />}{r.v[0]}</Cell>
          <Cell $big={big} $indent={i > 0} $plain>{i === 0 && <OBadge big={big} />}{r.v[1]}</Cell>
          <Cell $big={big} $indent={i > 0}>{i === 0 && <DBadge big={big} />}{r.v[2]}</Cell>
        </LegendRow>
      ))}
    </LegendLeft>
  );
}
type StatLine = { v: string[]; c: string };
function Stats({ rows }: { rows: StatLine[] }) {
  return (
    <LegendRight>
      {rows.map((r, i) => (
        <StatRow key={i} $color={r.c} $two={rows.length > 1}>
          <Cell $indent={i > 0}>{i === 0 && <Badge $bg="#3b97ee"><Shape d="M1 1h8L5 9z" /></Badge>}{r.v[0]}</Cell>
          <Cell $plain>{r.v[1]}</Cell>
          <Cell $indent={i > 0}>{i === 0 && <Badge $bg="#ea0f14"><Shape d="M1 9h8L5 1z" /></Badge>}{r.v[2]}</Cell>
          <Cell $plain>{r.v[3]}</Cell>
          <Cell $indent={i > 0}>{i === 0 && <Badge $bg="#f0a020"><Shape d="M5 1l4 4-4 4-4-4z" /></Badge>}{r.v[4]}</Cell>
          <Cell $plain>{r.v[5]}</Cell>
        </StatRow>
      ))}
    </LegendRight>
  );
}

const G_ROWS: LegendLine[] = [
  { name: "glat [G]", v: ["-0,03", "-0,03", "-0,00"], c: CYAN },
  { name: "glong [G]", v: ["-0,03", "0,11", "-0,14"], c: ORANGE },
];
const SPEED_ROW: LegendLine[] = [{ name: "SPEED [km/h]", v: ["264,6", "264,3", "0,4"], c: RED }];
const LEGENDS: Record<number, LegendLine[]> = {
  0: SPEED_ROW,
  1: G_ROWS,
  5: [{ name: "ABS [?..?]", v: ["0", "0", "0"], c: BLUE }],
  6: [{ name: "TC [?..?]", v: ["0", "0", "0"], c: PURPLE }],
};
const STATS: StatLine[][] = [
  [{ v: ["127,8", "132,8", "264,7", "264,4", "200,1", "202,0"], c: RED }],
  [{ v: ["", "", "", "0,36", "-0,65", "-0,66"], c: CYAN }, { v: ["", "", "", "0,61", "0,02", "0,03"], c: ORANGE }],
  [{ v: ["", "", "", "0,34", "-0,63", "-0,64"], c: RED }],
  [{ v: ["0", "0", "100", "100", "84", "83"], c: RED }],
  [{ v: ["0", "0", "100", "100", "10", "9"], c: PURPLE }],
  [{ v: ["0", "0", "0", "1", "0", "0"], c: BLUE }],
  [{ v: ["0", "0", "1", "1", "0", "0"], c: PURPLE }],
];
const GRID_M = Array.from({ length: 24 }, (_, i) => 4600 + i * 50);
const GRID_X = GRID_M.map(METRE_X);

function Sheets({ items, big }: { items: [string, string, number][]; big?: boolean }) {
  return (
    <SheetBar $big={big}>
      <BookSelect $big={big}>
        {!big && (
          <svg width="15" height="15" viewBox="0 0 15 15">
            <path d="M1 1h9v8H1zM3 3h9v8H3z" fill="#b58a50" stroke="#7c5c30" />
            <path d="M5 6h9v8H5z" fill="#f8f4ea" stroke="#7c5c30" />
          </svg>
        )}
        <select aria-label="Workbook"><option>1: Base</option></select>
        <Caret w={big ? 18 : 11} />
      </BookSelect>
      <SheetTabs $big={big}>
        {items.map(([key, name, w]) => {
          const on = name === "Driver";
          return (
            <SheetTab key={name} $w={w} $on={on} $big={big}>
              {key && <KeyCap $big={big}>{key}</KeyCap>}
              {on ? <><GreenBox $s={big ? 18 : 11} /><Ruler w={big ? 20 : 13} /><b>{name}</b></> : name}
            </SheetTab>
          );
        })}
      </SheetTabs>
    </SheetBar>
  );
}

function MainCharts() {
  return (
    <Charts>
      <Stack>
        <AxisRow $axis={42}>
          <span />
          <TopStrip>
            <span />
            <Sections>
              <Section $grow={663} $kind="str" $indent={40}>Str 11-12</Section>
              <Section $grow={457} $kind="turn">Turn 12</Section>
              <Section $grow={446} $kind="none" />
            </Sections>
          </TopStrip>
        </AxisRow>
        {PANELS.map((p, i) => (
          <AxisRow key={p.top} $axis={42}>
            <Axis p={p} width={42} labelX={33} />
            <Plot $h={p.h} $last={i === PANELS.length - 1}>
              <Curves p={p} x0={X0} span={SPAN} xs={GRID_X} />
              {LEGENDS[i] && <Legend rows={LEGENDS[i]} />}
              <Stats rows={STATS[i]} />
            </Plot>
          </AxisRow>
        ))}
        <CursorLayer $axis={42}>
          <EndBlock />
          <Cursor style={{ left: `${CURSOR}%` }}>
            {[190, 843, 946, 1034].map((y) => <CursorTick key={y} style={{ top: y - 142 }} />)}
          </Cursor>
        </CursorLayer>
      </Stack>
      <DistanceAxis>
        <Unit>metre</Unit>
        <DistanceScale>
          <svg viewBox={`${X0} 0 ${SPAN} 5`} preserveAspectRatio="none">
            <path
              d={Array.from({ length: 116 }, (_, i) => `M${324.5 + i * 13.4} 0V${i % 5 ? 2 : 4}`).join("")}
              stroke="#222"
            />
          </svg>
          {GRID_M.map((m) => (
            <DistanceLabel key={m} style={{ left: `${((METRE_X(m) - X0) / SPAN) * 100}%` }}>{m}</DistanceLabel>
          ))}
        </DistanceScale>
      </DistanceAxis>
    </Charts>
  );
}

/* The magnified copy of the top-left corner of the sheet. */
const BIG_PANELS: PanelSpec[] = [
  {
    top: 470, h: 223, zero: 680, step: 35.8, from: 0, to: 5,
    labels: { 1: "50", 2: "100", 3: "150", 4: "200", 5: "250" },
    lines: [
      { d: line("291,508.5 430,504 560,501 660,498 800,495.5 900,493.5 1095,490.5 1120,491 1148,501"), c: RED },
      { d: line("316,508 430,504 560,501 660,498 800,495.5 900,493.5 1095,490.5"), c: WHITE, dash: "17 42" },
      { d: line("1120,491 1148,501"), c: WHITE, dash: "3 3" },
    ],
  },
  { top: 693, h: 111, zero: 886.5, step: 31.4, from: 3, to: 6, labels: { 3: "3", 4: "4", 5: "5" }, lines: [] },
];
const BIG_X = Array.from({ length: 8 }, (_, i) => 315 + i * 107);

function MagnifiedSheet() {
  return (
    <Magnifier aria-label="Magnified view">
      <Sheets items={BIG_SHEETS} big />
      <MagnifierCharts>
        <AxisRow $axis={22}>
          <span />
          <TopStrip $big>
            <span />
            <Sections $big><Section $grow={1} $kind="str" $indent={65}>Str 11-12</Section></Sections>
          </TopStrip>
        </AxisRow>
        {BIG_PANELS.map((p, i) => (
          <AxisRow key={p.top} $axis={22}>
            <Axis p={p} width={22} labelX={7} big />
            <Plot $h={p.h} $big>
              <Curves p={p} x0={290} span={858} xs={BIG_X} />
              <Legend rows={i === 0 ? SPEED_ROW : G_ROWS} big />
            </Plot>
          </AxisRow>
        ))}
        <CursorLayer $axis={22}>
          <Cursor style={{ left: `${((1105 - 290) / 858) * 100}%` }}><CursorTick $big style={{ top: 71 }} /></Cursor>
        </CursorLayer>
      </MagnifierCharts>
    </Magnifier>
  );
}

const TRACK_TICKS: number[][] = [
  [1577, 386, 1575, 397], [1584, 391, 1584, 403], [1579, 392, 1582, 397], [1636, 388, 1634, 399], [1650, 411, 1660, 405],
  [1668, 489, 1678, 484], [1677, 494, 1684, 487], [1680, 496, 1689, 492], [1690, 530, 1703, 527],
  [1685, 541, 1687, 553], [1659, 545, 1659, 558], [1643, 550, 1652, 543], [1520, 434, 1522, 423],
  [1524, 436, 1527, 424], [1528, 437, 1533, 426], [1533, 438, 1537, 428], [1545, 433, 1545, 445],
  [1550, 433, 1550, 445], [1556, 445, 1563, 437], [1399, 388, 1403, 398], [1393, 433, 1395, 422],
];
function Track() {
  return (
    <TrackWindow>
      <TrackTitle>Track<TrackClose aria-label="Close track">·</TrackClose></TrackTitle>
      <TrackBody>
        monza
        <svg width="358" height="231" viewBox="1361 355 358 231" fill="none" stroke="#dedede">
          <path
            strokeWidth="1.5"
            d="M1427 390L1517 390.5L1577 391Q1579 396 1584 398Q1596 392 1612 391.5Q1635 392 1645 399Q1664 413 1668 442L1674 486L1683 494L1697 528Q1698 545 1686 547L1659 551Q1652 550 1648 546L1621 504L1612 493L1560 443Q1556 439 1545 438Q1536 437 1531 433Q1522 429 1510 429L1464 428"
          />
          <path strokeWidth="2" d="M1494 390L1440 390M1464 428H1500" />
          <path strokeWidth="4" d="M1464 427.5L1396 427Q1384 424 1384 413Q1385 402 1398 394Q1406 391 1440 390" />
          {TRACK_TICKS.map(([a, b, c, d], i) => <path key={i} d={`M${a} ${b}L${c} ${d}`} />)}
          <path d="M1447 372V406" stroke="#e00c0c" strokeWidth="4" />
          <path d="M1446 402h12v-5l9 8.5-9 8.5v-5h-12z" fill="#e00c0c" stroke="#c04040" />
          <path d="M1440 362h15l-1 10h-15z" fill="#111" stroke="#ddd" />
          <path d="M1441 365h12M1443 368.5h10" stroke="#eee" strokeWidth="3" strokeDasharray="3 3" />
          <circle cx="1410" cy="428" r="5.5" fill="#f40c0c" />
        </svg>
      </TrackBody>
    </TrackWindow>
  );
}

const EMBLEM_FONT = "'DejaVu Sans', sans-serif";
const EmblemArt = () => (
  <Emblem width="198" height="154" viewBox="1670 58 198 154" aria-label="Università del Simracing USA">
    <defs>
      <linearGradient id="shield" x1="0" y1="0" x2="0" y2="1">
        <stop offset="0" stopColor="#2a2a2a" />
        <stop offset="1" stopColor="#505050" />
      </linearGradient>
    </defs>
    <path d="M1705 113a68 58 0 0 1 134 0" fill="none" stroke="#3a3a3a" strokeWidth="3" />
    <path d="M1711 96q14-28 54-32l-4 6q-28 5-39 20z" fill="#e2494b" />
    <path d="M1787 64q40 8 50 40l-9-1q-8-24-36-34z" fill="#e2494b" />
    <path d="M1722 81l8 6M1744 68l5 8M1812 70l-7 7M1828 86l-9 6" stroke="#141414" strokeWidth="1.5" />
    <path d="M1700 113l8-8h128l8 8h14l-4 26h-166l-4-26z" fill="#1c1c1c" stroke="#3c3c3c" strokeWidth="2" />
    <path d="M1716 164Q1722 209 1772 209Q1816 209 1822 168L1806 166Q1800 190 1772 190Q1752 190 1742 172z" fill="#3a3a3a" stroke="#222" />
    <path d="M1694 149h157l-6 12-73 15-73-15z" fill="url(#shield)" stroke="#555" />
    <path d="M1697 162l16 5q1 14 8 24M1847 162l-16 5q-2 10-7 18" fill="none" stroke="#3a3a3a" strokeWidth="3" />
    <path d="M1687 121h12M1845 121h12" stroke="#c02020" strokeWidth="1.500" />
    <text x="1772" y="125" fontFamily={EMBLEM_FONT} fontSize="12" fontWeight="700" fontStyle="italic" fill="#fff" textAnchor="middle">UNIVERSITÀ DEL</text>
    <text x="1769" y="149" fontFamily={EMBLEM_FONT} fontSize="29" fontWeight="700" fontStyle="italic" textAnchor="middle" stroke="#0a0a0a" strokeWidth="4" paintOrder="stroke" fill="#fff">
      SIM<tspan fill="#f40808">RACING</tspan>
    </text>
    <text x="1773" y="204" fontFamily={EMBLEM_FONT} fontSize="20" fontWeight="700" fontStyle="italic" textAnchor="middle" fill="#fff" stroke="#111" strokeWidth="3" paintOrder="stroke">
      <tspan fill="#12b02a">U</tspan>S<tspan fill="#f01414">A</tspan>
    </text>
  </Emblem>
);

export default function App() {
  return (
    <Screen>
      <Global />
      <TitleBar>
        <svg width="16" height="16" viewBox="0 0 16 16">
          <rect width="16" height="16" fill="#b3202c" />
          <text x="8" y="11" fontSize="11" fontWeight="700" fill="#eee" textAnchor="middle" fontFamily="Roboto, sans-serif">i2</text>
          <path d="M2 13.5h12" stroke="#e88" />
        </svg>
        <Caption>base_ACC - MoTeC i2 Pro (x64) (1.1.6.904)</Caption>
        <WindowButtons>
          {["min", "max", "x"].map((n) => <WindowButton key={n} aria-label={n}><Icon n={n} s={14} /></WindowButton>)}
        </WindowButtons>
      </TitleBar>
      <CommandArea>
        <div>
          <MenuBar>{MENU.map((m) => <MenuItem key={m}>{m}</MenuItem>)}</MenuBar>
          <Toolbar>
            {TOOLS.map((g, i) => (
              <ToolGroup key={i}>
                {g.map((n) => (
                  <ToolButton key={n} aria-label={n} $on={n === "windows"} $dim={n === "zoomDel"}><Icon n={n} /></ToolButton>
                ))}
              </ToolGroup>
            ))}
            <SpeedSelect aria-label="Playback speed"><option>1x</option></SpeedSelect>
          </Toolbar>
        </div>
        <Brand><BrandI2>i2</BrandI2><BrandMotec>MoTeC</BrandMotec></Brand>
      </CommandArea>

      <Workspace>
        <SideTabs>
          {SIDE.map(([t, icon, h]) => <SideTab key={t} $h={h}><Icon n={icon} s={13} />{t}</SideTab>)}
        </SideTabs>
        <DataPanel>
          <PanelTitle>
            <Icon n="dataList" s={13} /><span>Data</span>
            <button aria-label="Pin"><Icon n="pin" s={13} /></button>
            <button aria-label="Close"><Icon n="x" s={14} /></button>
          </PanelTitle>
          <PanelTools>
            {["open", "close", "remove"].map((n) => <ToolButton key={n} aria-label={n}><Icon n={n} /></ToolButton>)}
            <Gap $w={7} />
            <ToolButton aria-label="scope"><Icon n="scope" /></ToolButton>
            <Gap $w={8} />
            <ToolButton aria-label="flag"><Icon n="flag" /></ToolButton>
            <ToolButton aria-label="add flag"><Icon n="flagPlus" /></ToolButton>
            <ToolButton aria-label="block"><Icon n="blocked" /></ToolButton>
            <svg width="8" height="5" viewBox="0 0 8 5"><path d="M0 0h8L4 5z" fill="#333" /></svg>
            <Gap $w={14} />
            <ToolButton aria-label="swap"><Icon n="swap" /></ToolButton>
          </PanelTools>
          <FilterInput aria-label="Filter laps" placeholder="Filter Laps..." />
          <GreenFrame>
            <LapHead>
              <span>Laps</span>
              <span>Time</span>
              <span><MBadge /></span>
              <span><OBadge /></span>
              <span><Badge $bg="#2fe84a" $fg="#0a4a0a">1</Badge></span>
              <span>Δ</span>
            </LapHead>
            {TREE.map(([level, open, text]) => (
              <TreeRow key={text} $level={level}>
                <Expander aria-label={open ? "Collapse" : "Expand"}>
                  <svg width="8" height="8" viewBox="0 0 8 8">
                    <path d={open ? "M1 4h6" : "M1 4h6M4 1v6"} stroke="#111" strokeWidth="1.5" />
                  </svg>
                </Expander>
                {text}
              </TreeRow>
            ))}
            <LapTable>
              <tbody>
                {LAPS.map(([time, tone], i) => (
                  <LapRow key={i} $sel={i === 5}>
                    <td>Lap {i + 1}</td>
                    <LapTime $tone={tone}>{time}</LapTime>
                    <td><Mark type="radio" name="main" aria-label={`Main lap ${i + 1}`} $round defaultChecked={i === 8} /></td>
                    <td>{i === 5 ? <OBadge /> : <Mark type="checkbox" aria-label={`Overlay lap ${i + 1}`} />}</td>
                    <td><Mark type="checkbox" aria-label={`Reference lap ${i + 1}`} /></td>
                    <td>{i === 0 ? "-" : "+"}</td>
                  </LapRow>
                ))}
              </tbody>
            </LapTable>
            <ListScroll />
          </GreenFrame>
          <PanelTabs>
            <PanelTab $on>Laps</PanelTab>
            <PanelTab>Outings</PanelTab>
            <PanelArrows>
              <svg width="6" height="9" viewBox="0 0 6 9"><path d="M5 1v7L1 4.5z" fill="none" stroke="#444" /></svg>
              <svg width="6" height="9" viewBox="0 0 6 9"><path d="M1 1v7l4-3.5z" fill="none" stroke="#444" /></svg>
            </PanelArrows>
          </PanelTabs>
        </DataPanel>

        <Main>
          <Outings>
            <Outing><MBadge />[1:51.110] Lap 9,21:15:33, 02/02/2025,  , monza,  [monza-mclaren_720s_gt3_evo-4-2025.02.02-21.15.33.ld]</Outing>
            <Outing><OBadge />[1:50.914] Lap 6,21:15:33, 02/02/2025,  , monza,  [monza-mclaren_720s_gt3_evo-4-2025.02.02-21.15.33.ld]</Outing>
          </Outings>
          <LapStrip>
            <StripLabel><GreenBox $s={10} />Laps</StripLabel>
            {[186, 191, 193, 192, 192, 188, 222].map((g, i) => (
              <StripCell key={i} $grow={g} $tone="#303030">{i + 2}</StripCell>
            ))}
            <StripCell $grow={152} $tone="#000">9</StripCell>
            <Position />
          </LapStrip>
          <Columns>
            <Worksheet>
              <Sheets items={SHEETS} />
              <ChartFrame>
                <MainCharts />
                <Gutter />
              </ChartFrame>
            </Worksheet>
            <RightTools>
              {RIGHT_TOOLS.map((g, i) => (
                <RightGroup key={i}>
                  {g.map((n) => (
                    <ToolButton key={n} aria-label={n} $dim={n === "delta" || n === "bars"}><Icon n={n} /></ToolButton>
                  ))}
                </RightGroup>
              ))}
            </RightTools>
          </Columns>
          <Track />
          <MagnifiedSheet />
          <Arrow width="140" height="170" viewBox="680 193 140 170">
            <path d="M813 196L789 207L794 212L688 346L697 354L802 217L806 222z" fill="#faff00" />
          </Arrow>
          <EmblemArt />
        </Main>
      </Workspace>

      <StatusBar>
        <StatusCell />
        <StatusCell />
        <StatusCell $pad={18} $strong>{"Time  95.537470 [s]"}<RedDot />{"Distance  4969 [m]"}</StatusCell>
        <StatusCell />
        <StatusCell $pad={3}><Icon n="stop" />Not Activated</StatusCell>
        <StatusCell $pad={4}>
          <svg width="16" height="18" viewBox="0 0 16 18" fontFamily="Roboto, sans-serif" fontSize="8" fontWeight="700">
            <text x="0" y="8" fill="#3c4cae">AB</text>
            <text x="5" y="16" fill="#c02c2c">AC</text>
          </svg>
        </StatusCell>
      </StatusBar>
    </Screen>
  );
}
